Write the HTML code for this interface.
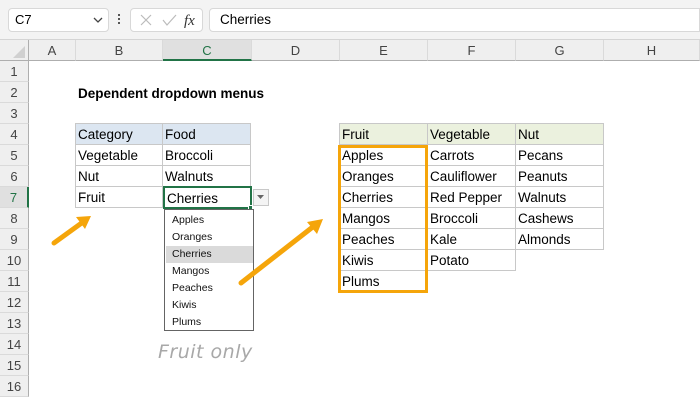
<!DOCTYPE html>
<html><head><meta charset="utf-8"><style>
*{margin:0;padding:0;box-sizing:border-box}
body{width:700px;height:400px;overflow:hidden;background:#fff;font-family:"Liberation Sans",sans-serif;position:relative}
.a{position:absolute}
.ch{position:absolute;top:40px;height:21px;background:#efefef;border-right:1px solid #dadada;border-bottom:1px solid #aeaeae;color:#444;font-size:13px;text-align:center;line-height:21px}
.rh{position:absolute;left:0;width:29px;height:21px;background:#efefef;border-bottom:1px solid #dadada;border-right:1px solid #aeaeae;color:#444;font-size:13px;text-align:center;line-height:22px}
.c{position:absolute;height:22px;border:1px solid #c8c8c8;font-size:13.5px;line-height:22px;padding-left:2px;color:#000;margin-left:-1px;margin-top:-1px}
.li{position:absolute;left:1px;width:87px;height:17px;font-size:10.5px;line-height:17px;padding-left:6px;color:#111}
</style></head><body>
<div class="a" style="left:0;top:0;width:700px;height:40px;background:#f3f3f3;border-bottom:1px solid #d4d4d4"></div>
<div class="a" style="left:8px;top:8px;width:101px;height:24px;background:#fff;border:1px solid #d8d8d8;border-radius:4px;font-size:13px;line-height:22px;padding-left:6px">C7</div>
<svg class="a" style="left:92px;top:16px" width="12" height="8"><path d="M2 2 L6 6 L10 2" stroke="#444" stroke-width="1.3" fill="none"/></svg>
<div class="a" style="left:118px;top:14px;width:2px;height:2px;background:#555;box-shadow:0 4px #555,0 8px #555"></div>
<div class="a" style="left:130px;top:8px;width:73px;height:24px;background:#fff;border:1px solid #d8d8d8;border-radius:4px"></div>
<svg class="a" style="left:138px;top:13px" width="70" height="16"><path d="M3 2 L13 12 M13 2 L3 12" stroke="#bbb" stroke-width="1.2"/><path d="M25 7 L29 12 L38 2" stroke="#bbb" stroke-width="1.2" fill="none"/><text x="46" y="12" font-family="Liberation Serif" font-style="italic" font-size="15" fill="#333">fx</text></svg>
<div class="a" style="left:209px;top:8px;width:491px;height:24px;background:#fff;border:1px solid #d8d8d8;border-radius:4px 0 0 4px;font-size:13.5px;line-height:22px;padding-left:10px">Cherries</div>
<div class="a" style="left:0;top:40px;width:29px;height:21px;background:#efefef;border-right:1px solid #aeaeae;border-bottom:1px solid #aeaeae"></div>
<svg class="a" style="left:12px;top:46px" width="14" height="13"><path d="M13 0 L13 12 L1 12Z" fill="#d0d0d0"/></svg>
<div class="ch" style="left:29px;width:47px">A</div>
<div class="ch" style="left:76px;width:87px">B</div>
<div class="ch" style="left:163px;width:89px;background:#e0e0e0;border-bottom:2px solid #217346;color:#217346">C</div>
<div class="ch" style="left:252px;width:88px">D</div>
<div class="ch" style="left:340px;width:88px">E</div>
<div class="ch" style="left:428px;width:88px">F</div>
<div class="ch" style="left:516px;width:88px">G</div>
<div class="ch" style="left:604px;width:96px">H</div>
<div class="rh" style="top:61px">1</div><div class="rh" style="top:82px">2</div><div class="rh" style="top:103px">3</div><div class="rh" style="top:124px">4</div><div class="rh" style="top:145px">5</div><div class="rh" style="top:166px">6</div>
<div class="rh" style="top:187px;background:#e0e0e0;border-right:2px solid #217346;color:#217346">7</div>
<div class="rh" style="top:208px">8</div><div class="rh" style="top:229px">9</div><div class="rh" style="top:250px">10</div><div class="rh" style="top:271px">11</div><div class="rh" style="top:292px">12</div><div class="rh" style="top:313px">13</div><div class="rh" style="top:334px">14</div><div class="rh" style="top:355px">15</div><div class="rh" style="top:376px">16</div>
<div class="a" style="left:78px;top:86px;font-size:13.5px;font-weight:bold;line-height:16px">Dependent dropdown menus</div>
<div class="c" style="left:76px;top:124px;width:88px;background:#dce6f1">Category</div>
<div class="c" style="left:163px;top:124px;width:89px;background:#dce6f1">Food</div>
<div class="c" style="left:76px;top:145px;width:88px">Vegetable</div>
<div class="c" style="left:163px;top:145px;width:89px">Broccoli</div>
<div class="c" style="left:76px;top:166px;width:88px">Nut</div>
<div class="c" style="left:163px;top:166px;width:89px">Walnuts</div>
<div class="c" style="left:76px;top:187px;width:88px">Fruit</div>
<div class="a" style="left:163px;top:186px;width:89px;height:23px;border:2px solid #217346;font-size:13.5px;line-height:21px;padding-left:2px">Cherries</div>
<div class="a" style="left:248px;top:205px;width:5px;height:5px;background:#217346;border:1px solid #fff"></div>
<div class="a" style="left:253px;top:189px;width:16px;height:17px;background:#f4f4f4;border:1px solid #c8c8c8"></div>
<svg class="a" style="left:257px;top:195px" width="8" height="5"><path d="M0 0 L7 0 L3.5 4Z" fill="#666"/></svg>
<div class="a" style="left:164px;top:209px;width:90px;height:122px;border:1px solid #646464;background:#fff">
<div class="li" style="top:2px">Apples</div>
<div class="li" style="top:19px">Oranges</div>
<div class="li" style="top:36px;background:#dadada">Cherries</div>
<div class="li" style="top:53px">Mangos</div>
<div class="li" style="top:70px">Peaches</div>
<div class="li" style="top:87px">Kiwis</div>
<div class="li" style="top:104px">Plums</div>
</div>
<div class="a" style="left:158px;top:341px;font-family:'DejaVu Sans',sans-serif;font-style:italic;font-size:19px;color:#a8a8a8;letter-spacing:0.5px">Fruit only</div>
<div class="c" style="left:340px;top:124px;width:89px;background:#ebf1de">Fruit</div>
<div class="c" style="left:428px;top:124px;width:89px;background:#ebf1de">Vegetable</div>
<div class="c" style="left:516px;top:124px;width:89px;background:#ebf1de">Nut</div>
<div class="c" style="left:340px;top:145px;width:89px">Apples</div><div class="c" style="left:428px;top:145px;width:89px">Carrots</div><div class="c" style="left:516px;top:145px;width:89px">Pecans</div>
<div class="c" style="left:340px;top:166px;width:89px">Oranges</div><div class="c" style="left:428px;top:166px;width:89px">Cauliflower</div><div class="c" style="left:516px;top:166px;width:89px">Peanuts</div>
<div class="c" style="left:340px;top:187px;width:89px">Cherries</div><div class="c" style="left:428px;top:187px;width:89px">Red Pepper</div><div class="c" style="left:516px;top:187px;width:89px">Walnuts</div>
<div class="c" style="left:340px;top:208px;width:89px">Mangos</div><div class="c" style="left:428px;top:208px;width:89px">Broccoli</div><div class="c" style="left:516px;top:208px;width:89px">Cashews</div>
<div class="c" style="left:340px;top:229px;width:89px">Peaches</div><div class="c" style="left:428px;top:229px;width:89px">Kale</div><div class="c" style="left:516px;top:229px;width:89px">Almonds</div>
<div class="c" style="left:340px;top:250px;width:89px">Kiwis</div><div class="c" style="left:428px;top:250px;width:89px">Potato</div>
<div class="c" style="left:340px;top:271px;width:89px">Plums</div>
<div class="a" style="left:338px;top:145px;width:90px;height:148px;border:3px solid #f5a50a"></div>
<svg class="a" style="left:0;top:0" width="700" height="400">
<g stroke="#f5a50a" stroke-width="5" stroke-linecap="round" fill="#f5a50a">
<line x1="54" y1="243" x2="83" y2="222"/>
<line x1="241" y1="283" x2="314" y2="226"/>
</g>
<path d="M91 216 L76 217 L85 229Z" fill="#f5a50a"/>
<path d="M323 219 L307 222 L317 234Z" fill="#f5a50a"/>
</svg>
</body></html>
